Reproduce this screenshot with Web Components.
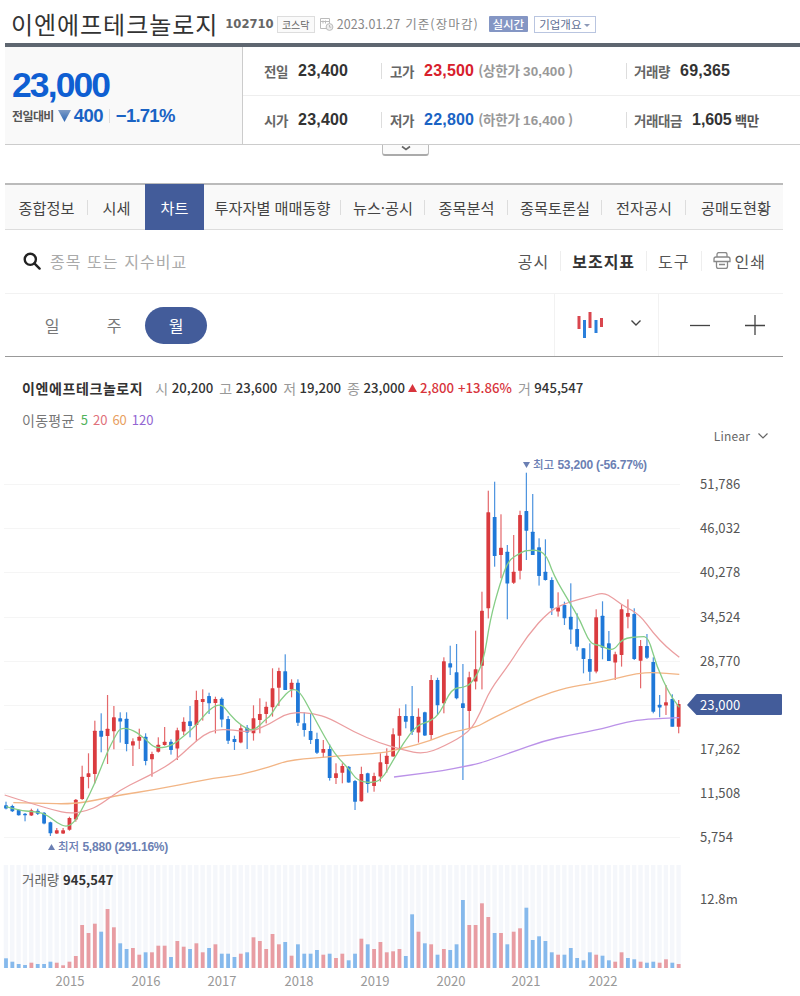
<!DOCTYPE html>
<html lang="ko">
<head>
<meta charset="utf-8">
<title>이엔에프테크놀로지</title>
<style>
    html, body { margin: 0; background: #fff; }
    body { width: 800px; height: 996px; overflow: hidden; font-family: "Noto Sans CJK KR", "Noto Sans", sans-serif; color: #333; }
</style>
</head>
<body>
<stock-header name="이엔에프테크놀로지" code="102710"></stock-header>
<price-summary></price-summary>
<stock-tabs>
    <stock-tab style="width:83px" divider>종합정보</stock-tab>
    <stock-tab style="width:57px">시세</stock-tab>
    <stock-tab style="width:59px" active>차트</stock-tab>
    <stock-tab style="width:137px" divider>투자자별 매매동향</stock-tab>
    <stock-tab style="width:84px" divider>뉴스·공시</stock-tab>
    <stock-tab style="width:83px" divider>종목분석</stock-tab>
    <stock-tab style="width:94px" divider>종목토론실</stock-tab>
    <stock-tab style="width:84px" divider>전자공시</stock-tab>
    <stock-tab style="width:94px;padding-left:3px">공매도현황</stock-tab>
</stock-tabs>
<chart-toolbar></chart-toolbar>
<period-bar></period-bar>
<chart-legend></chart-legend>
<stock-chart></stock-chart>

<script>
const FONT_KR = '"Noto Sans CJK KR", "Noto Sans", sans-serif';
const FONT_NUM = '"Liberation Sans", "Noto Sans CJK KR", sans-serif';

class StockHeaderElement extends HTMLElement {
    constructor() {
        super();

        const shadowRoot = this.attachShadow({ mode: 'open' });
        shadowRoot.innerHTML = `
        <style>
            :host {
                display: block;
                height: 44px;
                margin-left: 5px;
                border-bottom: 4px solid #5e6670;
            }
            .row {
                display: flex;
                align-items: center;
                height: 50px;
                padding-left: 6px;
                margin-top: -1px;
                white-space: nowrap;
            }
            h1 {
                margin: 0;
                font: 400 24px/30px ${FONT_KR};
                letter-spacing: .95px;
                color: #333;
            }
            .code {
                margin-left: 7px;
                font: 700 11.6px/16px "DejaVu Sans", sans-serif;
                color: #666;
            }
            .market {
                margin-left: 3px;
                width: 36px;
                height: 15px;
                border: 1px solid #ddd;
                background: #fafafa;
                font: 400 10px/15px ${FONT_KR};
                text-align: center;
                color: #666;
            }
            svg { margin-left: 4px; }
            .date {
                margin-left: 3px;
                font: 400 12.5px/16px ${FONT_KR};
                letter-spacing: .1px;
                color: #888;
            }
            .basis {
                margin-left: 5px;
                font: 400 12.5px/16px ${FONT_KR};
                letter-spacing: 1.1px;
                color: #888;
            }
            .live {
                margin-left: 10px;
                width: 39px;
                height: 16px;
                background: #8496c4;
                border-radius: 1px;
                font: 500 11.5px/16px ${FONT_KR};
                text-align: center;
                color: #fff;
            }
            .about {
                margin-left: 6px;
                width: 60px;
                height: 15px;
                border: 1px solid #b9c5e0;
                font: 400 11.5px/15px ${FONT_KR};
                text-align: center;
                color: #5f6f94;
            }
            .about i {
                display: inline-block;
                margin-left: 3px;
                vertical-align: 2px;
                border: 3px solid transparent;
                border-top: 3px solid #8d9ab8;
                border-bottom: 0;
            }
        </style>
        <div class="row">
            <h1 id="name"></h1>
            <span class="code" id="code"></span>
            <span class="market">코스닥</span>
            <svg width="15" height="14" viewBox="0 0 15 14" fill="none" stroke="#bbb" stroke-width="1">
                <path d="M1.5 1.5h9v10h-9zM1.5 4.5h9M4 3.5v3M6.5 3.5v3"/>
                <circle cx="10.5" cy="10" r="3.4" fill="#eee"/>
                <path d="M10.5 8v2.2h1.8"/>
            </svg>
            <span class="date">2023.01.27</span>
            <span class="basis">기준(장마감)</span>
            <span class="live">실시간</span>
            <span class="about">기업개요<i></i></span>
        </div>
        `;
    }
    connectedCallback() {
        this.shadowRoot.getElementById('name').textContent = this.getAttribute('name');
        this.shadowRoot.getElementById('code').textContent = this.getAttribute('code');
    }
}

class PriceSummaryElement extends HTMLElement {
    constructor() {
        super();

        const shadowRoot = this.attachShadow({ mode: 'open' });
        shadowRoot.innerHTML = `
        <style>
            :host {
                display: flex;
                position: relative;
                height: 97px;
                margin-left: 5px;
                border-bottom: 1px solid #ccc;
                white-space: nowrap;
                margin-bottom: 38px;
            }
            .now {
                flex: none;
                width: 238px;
                box-sizing: border-box;
                padding: 19px 0 0 7px;
                background: #f9f9f9;
                border-right: 1px solid #ccc;
            }
            .price {
                font: 700 35.5px/38px ${FONT_NUM};
                letter-spacing: -1.9px;
                color: #0f5fd2;
            }
            .change {
                display: flex;
                align-items: center;
                height: 24px;
            }
            .change span { font: 700 12px/24px ${FONT_KR}; letter-spacing: -.6px; color: #555; }
            .change b { font: 700 18.5px/24px ${FONT_NUM}; letter-spacing: -.6px; color: #1a63c4; }
            .change svg { margin: 0 3px 0 4px; }
            .change em { width: 1px; height: 14px; margin: 0 6px; background: #ddd; }
            .grid { flex: 1; display: flex; flex-direction: column; }
            .line { flex: 1; display: flex; align-items: center; }
            .line + .line { border-top: 1px solid #eee; }
            .cell { display: flex; align-items: center; height: 16px; }
            .c1 { width: 138px; padding-left: 21px; box-sizing: border-box; }
            .c2 { width: 245px; padding-left: 8px; box-sizing: border-box; border-left: 1px solid #ddd; }
            .c3 { padding-left: 7px; border-left: 1px solid #ddd; }
            .l { font: 700 13.5px/16px ${FONT_KR}; letter-spacing: -.4px; color: #666; }
            .v { margin-left: 10px; font: 700 16px/16px ${FONT_NUM}; color: #333; letter-spacing: .2px; }
            .up { color: #d8202c; }
            .down { color: #1a63c4; }
            .limit { margin-left: 4px; font: 700 13.5px/16px ${FONT_KR}; letter-spacing: -.25px; color: #999; }
            .limit u { text-decoration: none; font-family: ${FONT_NUM}; letter-spacing: .1px; margin-right: 3px; }
            .unit { margin-left: 3px; font: 700 13.5px/16px ${FONT_KR}; letter-spacing: -.3px; color: #555; }
            .toggle {
                position: absolute;
                left: 377px;
                top: 98px;
                width: 45px;
                height: 9px;
                background: #fbfbfb;
                border: 1px solid #bbb;
                border-top: 0;
                border-bottom: 2px solid #aaa;
                border-radius: 0 0 3px 3px;
                display: flex;
                justify-content: center;
            }
        </style>
        <div class="now">
            <div class="price">23,000</div>
            <div class="change">
                <span>전일대비</span>
                <svg width="13" height="12" viewBox="0 0 13 12"><defs><linearGradient id="dn" x1="0" y1="0" x2="0" y2="1"><stop offset="0" stop-color="#7e9cc6"/><stop offset="1" stop-color="#2a66b4"/></linearGradient></defs><path d="M0 0h13L6.5 12z" fill="url(#dn)"/></svg>
                <b>400</b><em></em><b style="letter-spacing:-.75px">−1.71%</b>
            </div>
        </div>
        <div class="grid">
            <div class="line">
                <div class="cell c1"><span class="l">전일</span><span class="v">23,400</span></div>
                <div class="cell c2"><span class="l">고가</span><span class="v up">23,500</span><span class="limit">(상한가 <u>30,400</u>)</span></div>
                <div class="cell c3"><span class="l">거래량</span><span class="v">69,365</span></div>
            </div>
            <div class="line">
                <div class="cell c1"><span class="l">시가</span><span class="v">23,400</span></div>
                <div class="cell c2"><span class="l">저가</span><span class="v down">22,800</span><span class="limit">(하한가 <u>16,400</u>)</span></div>
                <div class="cell c3"><span class="l">거래대금</span><span class="v" style="letter-spacing:-.1px">1,605</span><span class="unit">백만</span></div>
            </div>
        </div>
        <div class="toggle"><svg width="12" height="8" viewBox="0 0 12 8" fill="none" stroke="#666" stroke-width="1.6"><path d="M2 1.5l4 3 4-3"/></svg></div>
        `;
    }
}

class StockTabsElement extends HTMLElement {
    constructor() {
        super();

        const shadowRoot = this.attachShadow({ mode: 'open' });
        shadowRoot.innerHTML = `
        <style>
            :host {
                display: flex;
                width: 778px;
                height: 44px;
                margin-left: 5px;
                background: #f9f9f9;
                border-top: 2px solid #bbb;
                border-bottom: 1px solid #ddd;
                box-sizing: content-box;
            }
        </style>
        <slot></slot>
        `;
    }
}

class StockTabElement extends HTMLElement {
    constructor() {
        super();

        const shadowRoot = this.attachShadow({ mode: 'open' });
        shadowRoot.innerHTML = `
        <style>
            :host {
                display: flex;
                align-items: center;
                justify-content: center;
                position: relative;
                flex: none;
                height: 44px;
                font: 400 15.2px/20px ${FONT_KR};
                color: #444;
                white-space: nowrap;
            }
            :host([active]) {
                margin-top: -1px;
                height: 46px;
                background: #435c9a;
                color: #fff;
            }
            :host([divider])::after {
                content: "";
                position: absolute;
                right: 0;
                top: 15px;
                width: 1px;
                height: 15px;
                background: #ddd;
            }
        </style>
        <slot></slot>
        `;
    }
}

class ChartToolbarElement extends HTMLElement {
    constructor() {
        super();

        const shadowRoot = this.attachShadow({ mode: 'open' });
        shadowRoot.innerHTML = `
        <style>
            :host {
                display: flex;
                align-items: center;
                width: 778px;
                height: 63px;
                margin-left: 5px;
                border-bottom: 1px solid #f2f2f2;
                white-space: nowrap;
            }
            .search { display: flex; align-items: center; padding-left: 18px; flex: 1; margin-top: -2px; }
            .search svg { margin-left: 0; margin-top: 1px; }
            .search span {
                margin-left: 9px;
                font: 400 16px/20px ${FONT_KR};
                letter-spacing: 1.05px;
                color: #aaa;
            }
            .tools { display: flex; align-items: center; padding-right: 17px; margin-top: -2px; font: 400 16px/20px ${FONT_KR}; color: #555; letter-spacing: 1px; }
            .tools em { width: 1px; height: 20px; margin: 0 11px; background: #eee; }
            .tools b { font-weight: 700; color: #333; }
            .tools svg { margin-right: 4px; }
        </style>
        <div class="search">
            <svg width="18" height="18" viewBox="0 0 18 18" fill="none" stroke="#222" stroke-width="2.4">
                <circle cx="7.3" cy="7.3" r="5.6"/><path d="M11.4 11.4l5.2 5.2" stroke-linecap="round"/>
            </svg>
            <span>종목 또는 지수비교</span>
        </div>
        <div class="tools">
            <span>공시</span><em></em><b>보조지표</b><em></em><span>도구</span><em></em>
            <svg width="18" height="17" viewBox="0 0 18 17" fill="none" stroke="#888" stroke-width="1.3">
                <path d="M4 5V2.5a2 2 0 0 1 2-2h6a2 2 0 0 1 2 2V5M1 9.5V7a2 2 0 0 1 2-2h12a2 2 0 0 1 2 2v2.500z"/>
                <path d="M3.500 9.500v5a2 2 0 0 0 2 2h7a2 2 0 0 0 2-2v-5M6 12.500h6"/>
            </svg>
            <span>인쇄</span>
        </div>
        `;
    }
}

class PeriodBarElement extends HTMLElement {
    constructor() {
        super();

        const shadowRoot = this.attachShadow({ mode: 'open' });
        shadowRoot.innerHTML = `
        <style>
            :host {
                display: flex;
                align-items: stretch;
                width: 778px;
                height: 62px;
                margin-left: 5px;
                border-bottom: 1px solid #999;
            }
            .periods { flex: 1; display: flex; align-items: center; padding-left: 16px; }
            .periods span {
                width: 62px;
                height: 37px;
                border-radius: 19px;
                font: 400 16px/36px ${FONT_KR};
                text-align: center;
                color: #777;
            }
            .periods .on { background: #435c9a; color: #fff; }
            .type {
                position: relative;
                width: 105px;
                border-left: 1px solid #f2f2f2;
                border-right: 1px solid #f2f2f2;
                box-sizing: border-box;
            }
            .type svg { position: absolute; }
            .zoom { width: 124px; display: flex; align-items: center; justify-content: center; gap: 35px; padding-left: 12px; box-sizing: border-box; }
        </style>
        <div class="periods"><span>일</span><span>주</span><span class="on">월</span></div>
        <div class="type">
            <svg style="left:22px;top:16px" width="30" height="30" viewBox="0 0 30 30">
                <rect x="0.500" y="6" width="3" height="13" fill="#d9464e"/>
                <rect x="6" y="10" width="3" height="18" fill="#2a7fdb"/>
                <rect x="11.500" y="2" width="3" height="16" fill="#d9464e"/>
                <rect x="17.500" y="10" width="3" height="13" fill="#2a7fdb"/>
                <rect x="23" y="8" width="3" height="9" fill="#d9464e"/>
            </svg>
            <svg style="left:75px;top:25px" width="12" height="8" viewBox="0 0 12 8" fill="none" stroke="#444" stroke-width="1.400"><path d="M1.500 1.500l4.500 4.500 4.500-4.500"/></svg>
        </div>
        <div class="zoom">
            <svg width="20" height="20" viewBox="0 0 20 20" stroke="#444" stroke-width="1.300"><path d="M0 10.500h20"/></svg>
            <svg width="20" height="20" viewBox="0 0 20 20" stroke="#444" stroke-width="1.300"><path d="M0 10.500h20M10 0v20"/></svg>
        </div>
        `;
    }
}

class ChartLegendElement extends HTMLElement {
    constructor() {
        super();

        const shadowRoot = this.attachShadow({ mode: 'open' });
        shadowRoot.innerHTML = `
        <style>
            :host {
                display: block;
                height: 87px;
                padding: 0 32px 0 22px;
                box-sizing: border-box;
                white-space: nowrap;
            }
            .ohlc { display: flex; align-items: center; height: 20px; padding-top: 21px; font: 400 14px/20px ${FONT_KR}; color: #999; }
            .ohlc b { font: 500 13.200px/20px ${FONT_KR}; color: #333; }
            .ohlc .name { font-weight: 700; font-size: 14px; margin-right: 12px; letter-spacing: .6px; }
            .ohlc .val { margin: 0 6px 0 3.500px; }
            .ohlc .up { color: #d8343c; margin: 0; }
            .ma { display: flex; align-items: center; gap: 5px; margin-top: 14px; font: 400 14px/16px ${FONT_KR}; color: #777; }
            .ma span:first-child { letter-spacing: .3px; margin-right: 1px; }
            .ma span + span { font-size: 13px; }
            .scale { display: flex; align-items: center; justify-content: flex-end; gap: 8px; font: 400 12px/16px ${FONT_KR}; letter-spacing: .2px; color: #666; }
        </style>
        <div class="ohlc">
            <b class="name">이엔에프테크놀로지</b>
            시<b class="val">20,200</b>고<b class="val">23,600</b>저<b class="val">19,200</b>종<b class="val" style="margin-right:3px">23,000</b>
            <svg width="9" height="8" viewBox="0 0 9 8" style="margin-right:3px"><path d="M4.500 0l4.500 8H0z" fill="#d8343c"/></svg>
            <b class="up">2,800</b><b class="up" style="margin:0 6px 0 4px">+13.86%</b>거<b class="val">945,547</b>
        </div>
        <div class="ma">
            <span>이동평균</span><span style="color:#4fb25a">5</span><span style="color:#e0707a">20</span><span style="color:#e8a060">60</span><span style="color:#9366d2">120</span>
        </div>
        <div class="scale">
            <span>Linear</span>
            <svg width="10" height="6" viewBox="0 0 10 6" fill="none" stroke="#666" stroke-width="1.200"><path d="M.5 .5l4.500 4.500 4.500-4.500"/></svg>
        </div>
        `;
    }
}

// candles are [colour, wick top, wick bottom, body top, body bottom], y values taken
// from 3x crops of the price panel, so y = oy + value / 3
const CANDLE_GROUPS = [
    { oy: 650, rows: [
        ['b',455,478,466,476],['b',464,486,468,484],['b',478,497,480,496],['b',489,514,491,494],['r',476,498,481,497],
        ['b',476,495,482,491],['b',486,523,488,520],['b',515,558,517,550],['r',534,552,541,551],['r',534,552,541,551],
        ['r',500,542,504,539],['r',447,515,449,508],['r',347,450,380,447],['r',310,415,370,381],['r',212,400,242,372],
        ['b',190,307,242,260],['r',135,342,236,258],['r',168,298,202,244],['b',187,278,205,215],['b',187,304,206,282],
        ['r',265,348,274,287],['r',236,297,260,272],['b',250,346,260,333],['r',305,380,312,328],['r',262,308,284,305],
        ['r',231,287,275,285],['b',268,314,275,300],['r',233,330,241,296],['r',202,255,215,244],['b',168,262,214,228],
        ['r',122,274,150,225],['r',118,212,147,156],['b',128,192,138,160],['r',140,250,147,159],['b',142,232,146,208],
        ['b',198,282,207,272],['b',257,300,267,276],['r',225,280,235,278],['b',225,297,233,247],['r',166,272,205,250],
        ['r',145,250,192,210],['r',155,220,170,192]
    ] },
    { oy: 600, rows: [
        ['r',205,350,265,322],['r',203,318,213,263],['b',163,270,214,270],['r',238,292,248,268],['b',238,378,248,368],
        ['b',337,410,370,390],['b',342,432,393,420],['b',398,462,417,458],['r',420,473,447,458],['b',433,542,447,534],
        ['r',490,552,520,534],['r',490,550,498,518],['b',498,548,500,547],['b',540,630,543,605],['r',500,605,522,604],
        ['b',518,578,520,552],['r',518,575,528,558],['r',460,545,487,530],['r',445,518,467,492],['r',385,470,403,470],
        ['r',325,450,348,407],['b',313,385,348,365],['b',258,405,348,395],['r',325,428,350,397],['b',335,408,337,407],
        ['r',225,420,240,405],['b',233,345,240,316],['r',172,340,184,310],['b',137,225,190,203],['b',132,298,217,295],
        ['b',192,540,310,324],['r',215,385,232,333]
    ] },
    { oy: 460, rows: [
        ['r',512,688,628,665],['r',395,688,452,617],['r',92,475,157,445],['b',65,320,171,288],['r',163,355,263,285],
        ['b',255,478,275,370],['r',225,372,335,368],['r',152,358,165,332],['b',38,300,153,212],['b',102,285,215,285],
        ['b',235,377,262,348],['b',238,362,335,360],['b',352,465,360,445],['r',397,470,442,455],['b',425,495,435,475],
        ['b',370,552,470,508],['b',460,572,507,560],['b',565,640,565,597],['b',550,663,597,635],['r',448,640,472,635],
        ['b',424,598,467,563],['b',513,600,550,603],['r',575,660,583,608],['r',433,620,448,585],['r',418,505,459,470],
        ['b',445,600,462,597],['r',540,685,558,602],['b',522,597,558,593],['b',592,760,606,755],['b',705,772,734,742],
        ['r',675,765,727,737],['b',703,800,717,800],['r',720,820,732,800]
    ] }
];

// volume bar tops, same crops, y = 860 + value / 3
const VOLUME = [
    'b295','b305','b312','b315','r308','b312','b312','b305','r308','r316','r305','r288','r195','r219','r191','b215',
    'r147','r202','b250','b267','r264','r284','b277','r277','r257','r257','b291','r243','r260','b267','r250','r277',
    'b264','r253','b281','b281','b291','r281','b277','r232','r243','r267','r222','r253','b246','r287','b253','b281',
    'b281','b270','r284','b281','r294','r281','b301','b281','r236','b253','r267','r246','r277','r274','r267','b288',
    'b163','r215','b250','r253','b284','r267','b270','b253','b120','r195','r195','r130','r171','b219','r219','b253',
    'r215','r205','b143','b240','b229','b243','b277','r284','b284','b264','b294','b301','b277','r284','b287','b301',
    'r305','r277','b294','b298','r305','b308','b305','r308','r298','b308','r312'
];

const crop = (ox, oy, flat) => {
    const out = [];
    for (let i = 0; i < flat.length; i += 2) out.push([ox + flat[i] / 3, oy + flat[i + 1] / 3]);
    return out;
};

const MOVING_AVERAGES = [
    { color: '#f2b585', pts: [
        ...crop(0, 650, [40,458,120,460,220,462,290,450,360,435,460,420,560,400,640,385,720,375]),
        ...crop(270, 600, [0,500,50,483,100,477,160,472,240,465,330,460,400,445,480,423,540,397,620,382]),
        ...crop(470, 460, [60,778,130,745,200,712,290,682,370,670,440,655,500,640,550,637,628,643])
    ] },
    { color: '#eb9ea0', pts: [
        ...crop(0, 650, [14,435,60,450,110,465,160,480,210,491,260,483,300,465,360,420,420,390,470,365,520,335,570,290,610,255,650,238,700,240,750,247]),
        ...crop(270, 600, [0,372,40,345,80,337,130,340,180,355,250,395,330,430,400,450,460,463,520,440,600,395]),
        ...crop(470, 460, [30,760,60,690,120,610,170,530,240,450,300,425,360,410,400,397,430,415,460,437,510,465,550,520,590,562,628,592])
    ] },
    { color: '#bb92e8', pts: [
        ...crop(270, 600, [372,531,440,522,520,512,580,500,630,490]),
        ...crop(470, 460, [130,875,220,843,300,825,400,806,470,785,530,777,628,773])
    ] },
    { color: '#86cd86', pts: [
        ...crop(0, 650, [18,470,60,482,95,484,135,490,170,518,200,532,225,515,250,470,285,400,320,310,345,260,362,232,400,240,440,270,465,295,510,290,550,260,590,225,630,175,665,160,690,195,725,228,760,245,800,205]),
        ...crop(270, 600, [0,350,30,300,65,265,90,275,120,330,180,440,210,480,240,510,260,540,300,550,335,540,370,480,400,430,440,375,480,365,510,340,545,265,580,263,605,250]),
        ...crop(470, 460, [40,610,60,480,90,370,115,300,150,280,170,270,225,272,250,345,300,430,330,480,360,552,390,555,430,575,457,535,510,530,535,530,560,620,600,705,628,742])
    ] }
];

const AXIS = [
    ['51,786', 484], ['46,032', 528], ['40,278', 572], ['34,524', 617], ['28,770', 661],
    ['17,262', 749], ['11,508', 793], ['5,754', 837]
];
const YEARS = [[2015, 70], [2016, 146], [2017, 222], [2018, 299], [2019, 375], [2020, 451], [2021, 526], [2022, 603]];

const barX = i => 6 + 6.346 * i;

// midpoint quadratic, keeps the averages from looking like a polyline
const smoothPath = pts => {
    let d = `M${pts[0][0].toFixed(1)} ${pts[0][1].toFixed(1)}`;
    for (let i = 1; i < pts.length - 1; i++) {
        const mx = (pts[i][0] + pts[i + 1][0]) / 2;
        const my = (pts[i][1] + pts[i + 1][1]) / 2;
        d += `Q${pts[i][0].toFixed(1)} ${pts[i][1].toFixed(1)} ${mx.toFixed(1)} ${my.toFixed(1)}`;
    }
    const last = pts[pts.length - 1];
    return d + `L${last[0].toFixed(1)} ${last[1].toFixed(1)}`;
};

class StockChartElement extends HTMLElement {
    constructor() {
        super();

        const shadowRoot = this.attachShadow({ mode: 'open' });
        shadowRoot.innerHTML = `
        <style>
            :host { display: block; width: 800px; height: 552px; }
            svg { display: block; }
            text { font-family: ${FONT_KR}; }
            .axis { font-size: 13px; fill: #555; letter-spacing: .1px; }
            .year { font-size: 13px; fill: #999; text-anchor: middle; }
            .mark { font-size: 11.500px; fill: #6b7fb3; font-weight: 500; }
            .mark tspan { font-family: ${FONT_NUM}; font-size: 12px; font-weight: 700; letter-spacing: -.2px; }
        </style>
        <svg id="plot" width="800" height="552" viewBox="0 444 800 552"></svg>
        `;
    }
    connectedCallback() {
        this.shadowRoot.getElementById('plot').innerHTML = this.renderPlot();
    }

    renderPlot() {
        let s = '';

        for (const [label, y] of AXIS) {
            s += `<rect x="4" y="${y}" width="676" height="1" fill="#f5f5f5"/>`;
            s += `<text class="axis" x="700" y="${y + 5}">${label}</text>`;
        }
        s += `<rect x="4" y="705" width="676" height="1" fill="#f5f5f5"/>`;

        // volume panel
        VOLUME.forEach((v, i) => {
            s += `<rect x="${(barX(i) - 2.300).toFixed(2)}" y="865" width="4.400" height="103" fill="#f5f7fb"/>`;
        });
        VOLUME.forEach((v, i) => {
            const top = 860 + Number(v.slice(1)) / 3;
            const fill = v[0] == 'r' ? '#e89da3' : '#86b9ec';
            s += `<rect x="${(barX(i) - 1.900).toFixed(2)}" y="${top.toFixed(1)}" width="3.800" height="${(968 - top).toFixed(1)}" fill="${fill}"/>`;
        });
        s += `<text x="22" y="885" style="font-size:13.500px;fill:#666">거래량 <tspan style="font-weight:700;fill:#333;font-size:13px">945,547</tspan></text>`;
        s += `<text class="axis" x="700" y="904">12.8m</text>`;
        for (const [year, x] of YEARS) {
            s += `<text class="year" x="${x}" y="986">${year}</text>`;
        }

        // candles
        let index = 0;
        for (const group of CANDLE_GROUPS) {
            for (const [c, wt, wb, bt, bb] of group.rows) {
                const x = barX(index++);
                const color = c == 'r' ? '#da3b3f' : '#1f78d8';
                const wick = c == 'r' ? '#e4686b' : '#4b93df';
                const y = v => group.oy + v / 3;
                s += `<rect x="${(x - .6).toFixed(2)}" y="${y(wt).toFixed(1)}" width="1.200" height="${((wb - wt) / 3).toFixed(1)}" fill="${wick}"/>`;
                s += `<rect x="${(x - 1.900).toFixed(2)}" y="${y(bt).toFixed(1)}" width="3.800" height="${Math.max((bb - bt) / 3, 1.500).toFixed(1)}" rx=".5" fill="${color}"/>`;
            }
        }

        for (const ma of MOVING_AVERAGES) {
            s += `<path d="${smoothPath(ma.pts)}" fill="none" stroke="${ma.color}" stroke-width="1.300" stroke-linejoin="round"/>`;
        }

        // high / low marks
        s += `<path d="M523 462h7l-3.500 6z" fill="#6b7fb3"/>`;
        s += `<text class="mark" x="533" y="469">최고 <tspan>53,200 (-56.77%)</tspan></text>`;
        s += `<path d="M48 850h7l-3.500-6z" fill="#6b7fb3"/>`;
        s += `<text class="mark" x="58" y="851">최저 <tspan>5,880 (291.16%)</tspan></text>`;

        // last price tag
        s += `<path d="M687 705l9-10.500q.5-.5 1-.5h84q1 0 1 1v19q0 1-1 1h-84q-.5 0-1-.5z" fill="#435c9a"/>`;
        s += `<text x="700" y="710" style="font-size:13px;fill:#fff;letter-spacing:.1px">23,000</text>`;
        return s;
    }
}

window.customElements.define('stock-header', StockHeaderElement);
window.customElements.define('price-summary', PriceSummaryElement);
window.customElements.define('stock-tabs', StockTabsElement);
window.customElements.define('stock-tab', StockTabElement);
window.customElements.define('chart-toolbar', ChartToolbarElement);
window.customElements.define('period-bar', PeriodBarElement);
window.customElements.define('chart-legend', ChartLegendElement);
window.customElements.define('stock-chart', StockChartElement);
</script>
</body>
</html>
